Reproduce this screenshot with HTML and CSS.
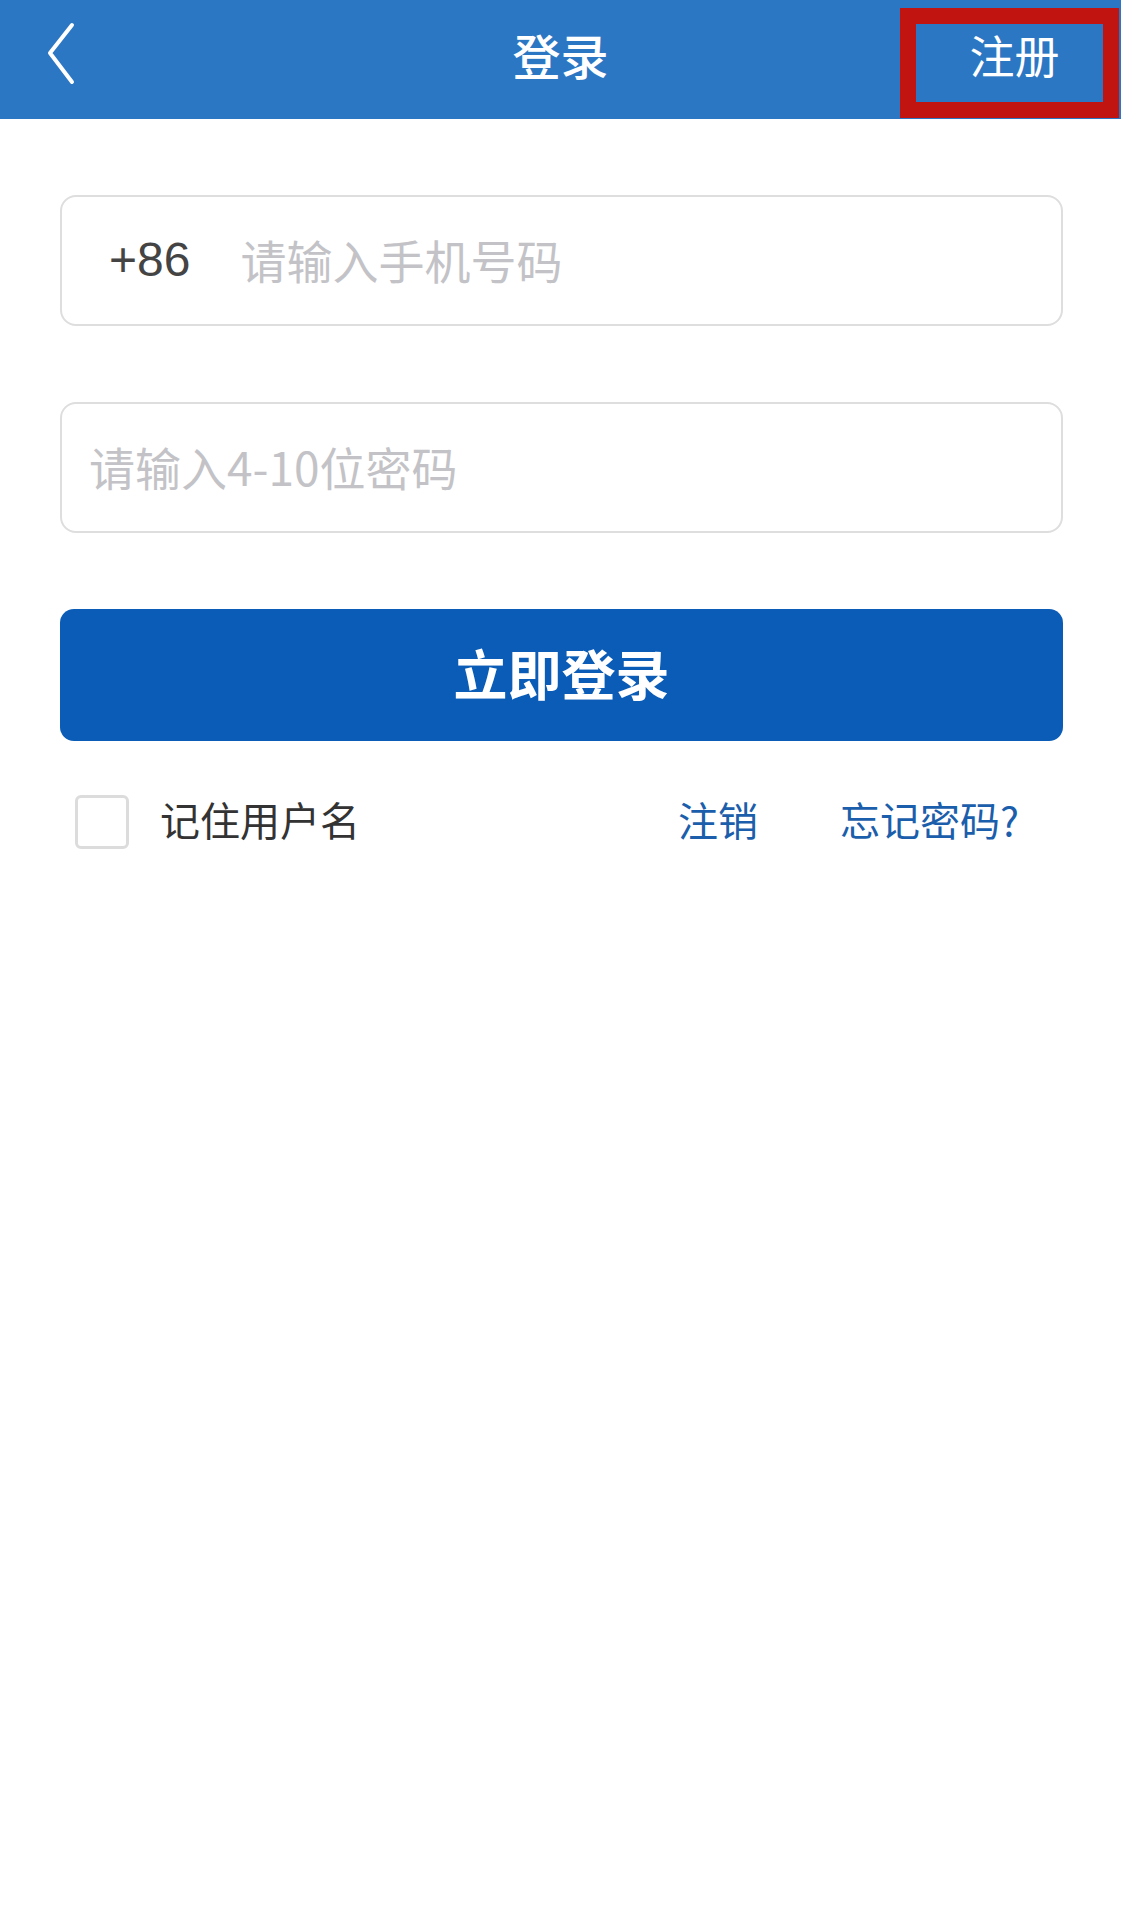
FILE: index.html
```html
<!DOCTYPE html>
<html lang="zh-CN">

<head>
  <meta charset="UTF-8" />
  <meta name="viewport" content="width=device-width, initial-scale=1.0" />
  <title>登录</title>
  <link rel="stylesheet" href="styles.css">
</head>

<body>
  <header class="topbar">
    <a class="back" href="#">
      <svg width="34" height="64" viewBox="0 0 34 64">
        <polyline points="26,3 4,31 26,60" fill="none" stroke="#fff" stroke-width="4" stroke-linecap="round" stroke-linejoin="round" />
      </svg>
    </a>
    <h1 class="title">登录</h1>
    <a class="register" href="#">注册</a>
  </header>

  <main class="form">
    <div class="field">
      <span class="prefix">+86</span>
      <input type="tel" class="field-input" placeholder="请输入手机号码" />
    </div>

    <div class="field field-pwd">
      <input type="password" class="field-input" placeholder="请输入4-10位密码" />
    </div>

    <button class="submit" type="button">立即登录</button>

    <div class="options">
      <label class="remember">
        <span class="checkbox"></span>
        <span class="label-text">记住用户名</span>
      </label>
      <a class="link" href="#">注销</a>
      <a class="link link-last" href="#">忘记密码?</a>
    </div>
  </main>
</body>

</html>
```

FILE: styles.css
```css
body {
  margin: 0;
  padding: 0;
  min-height: 1927px;
  font-family: "Noto Sans CJK SC", "Noto Sans", sans-serif;
  background-color: #fff;
  color: #333;
}

a {
  text-decoration: none;
}

.topbar {
  display: grid;
  grid-template-columns: 1fr auto 1fr;
  align-items: center;
  height: 119px;
  background: #2b77c4;
  color: #fff;
}

.back {
  display: flex;
  padding-left: 46px;
  padding-bottom: 12px;
}

.title {
  margin: 0;
  font-size: 48px;
  font-weight: 500;
  line-height: 1;
  padding-bottom: 12px;
}

.register {
  justify-self: end;
  align-self: end;
  box-sizing: border-box;
  width: 219px;
  height: 110px;
  margin-right: 2px;
  margin-bottom: 1px;
  border: 16px solid #c1130f;
  display: flex;
  align-items: center;
  justify-content: center;
  padding: 0 0 18px 10px;
  color: #fff;
  font-size: 45px;
  line-height: 1;
}

.form {
  padding: 76px 58px 0 60px;
}

.field {
  box-sizing: border-box;
  display: flex;
  align-items: center;
  height: 131px;
  border: 2px solid #dedede;
  border-radius: 16px;
  padding-left: 47px;
  padding-bottom: 3px;
}

.field-pwd {
  margin-top: 76px;
  padding-left: 27px;
}

.prefix {
  font-family: "Liberation Sans", sans-serif;
  font-size: 48px;
  color: #444;
  margin-right: 50px;
}

.field-input {
  flex: 1;
  min-width: 0;
  border: none;
  outline: none;
  padding: 0;
  background: transparent;
  font-family: inherit;
  font-size: 46px;
  color: #333;
}

.field-input::placeholder {
  color: #c3c3c7;
}

.submit {
  display: block;
  width: 100%;
  height: 132px;
  margin-top: 76px;
  border: none;
  border-radius: 14px;
  background: #0a5cb6;
  color: #fff;
  font-family: inherit;
  font-size: 54px;
  font-weight: 700;
  padding-bottom: 6px;
}

.options {
  display: flex;
  align-items: center;
  margin-top: 54px;
  padding-left: 15px;
  font-size: 40px;
  line-height: 1;
}

.remember {
  display: flex;
  align-items: center;
  flex: 1;
  color: #333;
}

.checkbox {
  box-sizing: border-box;
  width: 54px;
  height: 54px;
  border: 3px solid #dcdcdc;
  border-radius: 6px;
  margin-right: 31px;
}

.label-text,
.link {
  margin-bottom: 6px;
}

.link {
  color: #1b5eab;
}

.link-last {
  margin-left: 82px;
  margin-right: 44px;
}
```
